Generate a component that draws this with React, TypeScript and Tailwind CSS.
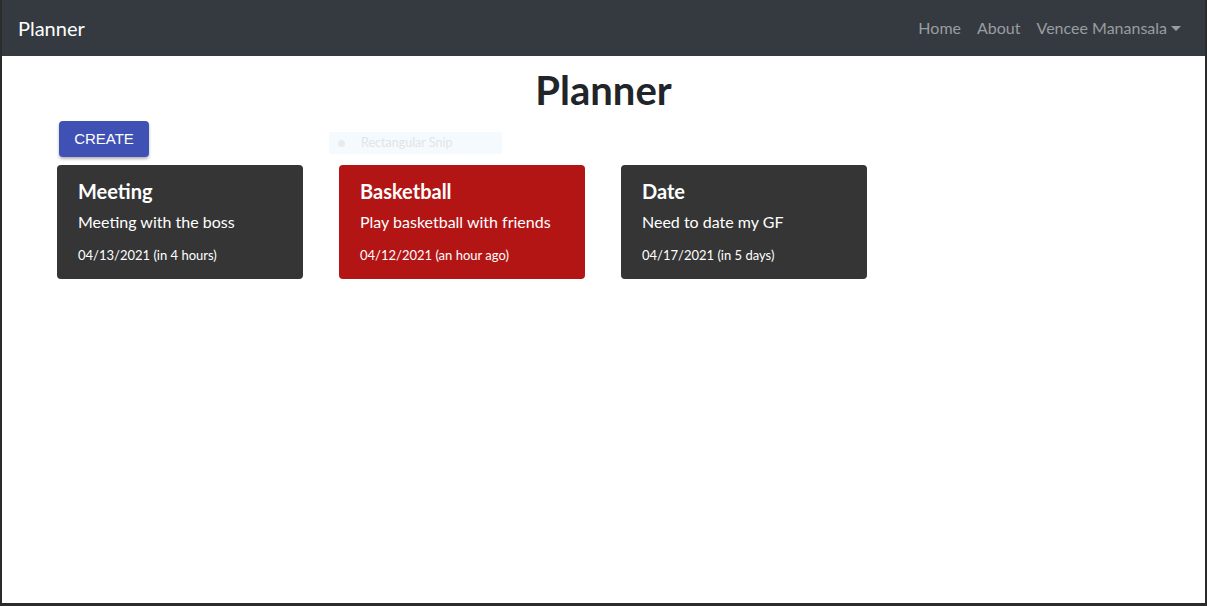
import React from 'react';

const events = [
  { title: 'Meeting', desc: 'Meeting with the boss', date: '04/13/2021 (in 4 hours)', past: false },
  { title: 'Basketball', desc: 'Play basketball with friends', date: '04/12/2021 (an hour ago)', past: true },
  { title: 'Date', desc: 'Need to date my GF', date: '04/17/2021 (in 5 days)', past: false },
];

export default function App() {
  return (
    <div
      className="h-[606px] w-[1207px] overflow-hidden border-x-2 border-b-[3px] border-[#2b2b2b] bg-white"
      style={{ fontFamily: '"Segoe UI", Lato, "Noto Sans", sans-serif' }}
    >
      <nav className="flex h-[56px] items-center justify-between bg-[#343a40] pl-[16px] pr-[24px]">
        <span className="text-[20px] text-white">Planner</span>
        <div className="flex items-center gap-[16px] text-[16px] text-[#9a9da0]">
          <span>Home</span>
          <span>About</span>
          <span className="flex items-center gap-[4px]">
            Vencee Manansala
            <span className="mt-[1px] h-0 w-0 border-x-[5px] border-t-[5px] border-x-transparent border-t-[#9a9da0]" />
          </span>
        </div>
      </nav>

      <main className="relative px-[55px]">
        <h1 className="pt-[10px] text-center text-[40px] font-bold leading-[48px] text-[#212529]">Planner</h1>

        <div className="mt-[7px] flex">
          <button
            className="ml-[2px] flex h-[36px] w-[90px] items-center justify-center rounded-[4px] bg-[#3f51b5] text-[15px] text-white shadow-[0_2px_3px_rgba(0,0,0,0.3)]"
            style={{ fontFamily: '"Liberation Sans", Arial, sans-serif' }}
          >
            CREATE
          </button>
        </div>

        <div className="absolute left-[327px] top-[76px] flex h-[22px] w-[173px] items-center bg-[#f5faff] text-[12.5px] text-[#e2e4e6]">
          <span className="ml-[9px] h-[7px] w-[7px] rounded-full bg-[#e8ebee]" />
          <span className="ml-[16px]">Rectangular Snip</span>
        </div>

        <div className="mt-[8px] flex gap-[36px]">
          {events.map((e) => (
            <div
              key={e.title}
              className={`h-[114px] w-[246px] rounded-[4px] px-[21px] pt-[12px] text-white ${e.past ? 'bg-[#b31515]' : 'bg-[#353535]'}`}
            >
              <div className="text-[20px] font-bold leading-[28px]">{e.title}</div>
              <div className="mt-[5px] text-[16px] leading-[24px]">{e.desc}</div>
              <div className="mt-[12px] text-[13px] leading-[18px]">{e.date}</div>
            </div>
          ))}
        </div>
      </main>
    </div>
  );
}
